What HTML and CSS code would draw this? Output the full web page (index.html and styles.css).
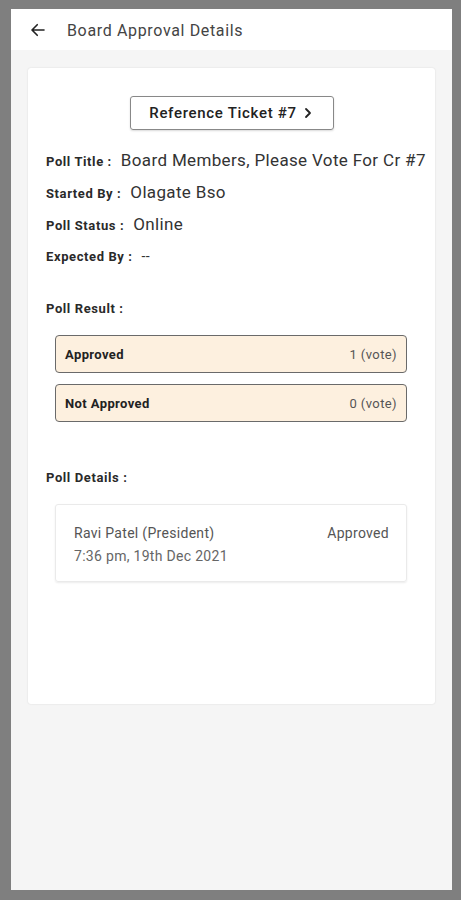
FILE: index.html
```html
<!DOCTYPE html>
<html>
<head>
<meta charset="utf-8">
<link rel="stylesheet" href="styles.css">
</head>
<body>
<div class="screen">
  <header class="topbar">
    <svg class="back" width="18" height="18" viewBox="0 0 24 24"><path d="M20 12H5M11 5l-7 7 7 7" fill="none" stroke="#222" stroke-width="2.2" stroke-linecap="round" stroke-linejoin="round"/></svg>
    <span class="title">Board Approval Details</span>
  </header>
  <main class="content">
    <section class="card">
      <div class="btn-wrap">
        <div class="ref-btn">Reference Ticket #7
          <svg width="12" height="12" viewBox="0 0 12 12"><path d="M4 2l4 4-4 4" fill="none" stroke="#222" stroke-width="1.8" stroke-linecap="round" stroke-linejoin="round"/></svg>
        </div>
      </div>
      <div class="info">
        <div class="row"><span class="lbl">Poll Title :</span><span class="val">Board Members, Please Vote For Cr #7</span></div>
        <div class="row"><span class="lbl">Started By :</span><span class="val">Olagate Bso</span></div>
        <div class="row"><span class="lbl">Poll Status :</span><span class="val">Online</span></div>
        <div class="row last"><span class="lbl">Expected By :</span><span class="val small">--</span></div>
      </div>
      <div class="section-lbl result-lbl">Poll Result :</div>
      <div class="bars">
        <div class="bar"><span class="bar-name">Approved</span><span class="bar-count">1 (vote)</span></div>
        <div class="bar"><span class="bar-name">Not Approved</span><span class="bar-count">0 (vote)</span></div>
      </div>
      <div class="section-lbl details-lbl">Poll Details :</div>
      <div class="detail">
        <div class="detail-left">
          <div class="d-name">Ravi Patel (President)</div>
          <div class="d-date">7:36 pm, 19th Dec 2021</div>
        </div>
        <div class="d-status">Approved</div>
      </div>
    </section>
  </main>
</div>
</body>
</html>
```

FILE: styles.css
```css
html, body {
  margin: 0;
  padding: 0;
}
body {
  background: #7f7f7f;
  font-family: Roboto, "Liberation Sans", sans-serif;
  width: 461px;
  height: 900px;
  overflow: hidden;
}
.screen {
  margin: 9px 9px 0 11px;
  width: 441px;
  height: 881px;
  background: #f5f5f5;
  display: flex;
  flex-direction: column;
}
.topbar {
  height: 41px;
  background: #fff;
  display: flex;
  align-items: center;
  padding-left: 18px;
  box-sizing: border-box;
}
.back {
  margin-right: 20px;
}
.title {
  font-size: 16px;
  letter-spacing: 0.65px;
  color: #444;
  margin-top: 2px;
}
.content {
  padding: 18px 17px 0 17px;
}
.card {
  background: #fff;
  height: 636px;
  box-sizing: border-box;
  padding: 28px 0 0 18px;
  border-radius: 3px;
  box-shadow: 0 0 2px rgba(0,0,0,0.12);
}
.btn-wrap {
  display: flex;
  justify-content: center;
  padding-right: 18px;
}
.ref-btn {
  width: 204px;
  height: 34px;
  box-sizing: border-box;
  border: 1px solid #888;
  border-radius: 3px;
  display: flex;
  align-items: center;
  justify-content: center;
  gap: 5px;
  font-size: 15px;
  font-weight: 500;
  letter-spacing: 0.7px;
  color: #222;
  box-shadow: 0 1px 2px rgba(0,0,0,0.15);
}
.info {
  margin-top: 20px;
  display: flex;
  flex-direction: column;
  gap: 10px;
}
.row {
  display: flex;
  align-items: baseline;
  height: 22px;
}
.row.last {
  margin-top: 2px;
}
.lbl {
  font-size: 13px;
  font-weight: 700;
  letter-spacing: 0.6px;
  color: #2a2a2a;
  margin-right: 9px;
}
.val {
  font-size: 17px;
  letter-spacing: 0.35px;
  color: #333;
}
.val.small {
  font-size: 14px;
}
.section-lbl {
  font-size: 13px;
  font-weight: 700;
  letter-spacing: 0.6px;
  color: #2a2a2a;
}
.result-lbl {
  margin-top: 31px;
}
.bars {
  margin: 19px 28px 0 9px;
  display: flex;
  flex-direction: column;
  gap: 11px;
}
.bar {
  height: 38px;
  box-sizing: border-box;
  border: 1px solid #6a6a6a;
  border-radius: 4px;
  background: #fdf0df;
  display: flex;
  align-items: center;
  justify-content: space-between;
  padding: 0 9px;
  font-size: 13px;
  letter-spacing: 0.4px;
}
.bar-name {
  font-weight: 700;
  color: #222;
}
.bar-count {
  color: #555;
}
.details-lbl {
  margin-top: 48px;
}
.detail {
  margin: 19px 28px 0 9px;
  height: 78px;
  box-sizing: border-box;
  border: 1px solid #eaeaea;
  border-radius: 3px;
  box-shadow: 0 1px 2px rgba(0,0,0,0.08);
  display: flex;
  justify-content: space-between;
  padding: 20px 17px 0 18px;
}
.d-name, .d-status {
  font-size: 14px;
  letter-spacing: 0.3px;
  color: #555;
}
.d-date {
  font-size: 14px;
  letter-spacing: 0.3px;
  color: #666;
  margin-top: 7px;
}
```
